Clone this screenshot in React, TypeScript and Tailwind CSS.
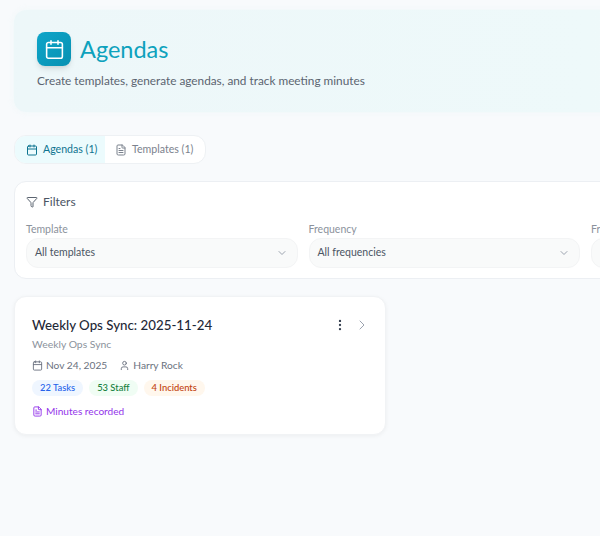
import React from "react";
import { Calendar, ChevronDown, ChevronRight, EllipsisVertical, FileText, Funnel, User } from "lucide-react";

const selects = [
  { label: "Template", value: "All templates" },
  { label: "Frequency", value: "All frequencies" },
  { label: "From", value: "" },
];

export default function App() {
  return (
    <div className="h-[536px] w-[600px] overflow-hidden bg-[#f8fafc] font-['Lato','Noto_Sans',sans-serif]">
      <div className="flex w-[1150px] flex-col pl-3.5 pt-2.5">
        <div className="h-[102px] rounded-xl bg-gradient-to-r from-[#edf7f9] via-[#eef9fa] to-[#f5fbfc] pl-[23px] pt-[22px] shadow-[0_0_6px_rgba(237,247,249,0.8)]">
          <div className="flex items-center gap-[9px]">
            <div className="flex size-[34px] items-center justify-center rounded-lg bg-gradient-to-br from-[#0ea5c9] to-[#0891b2] shadow-md">
              <Calendar className="size-[21px] text-white" strokeWidth={1.8} />
            </div>
            <h1 className="text-[23.5px] leading-[34px] font-normal text-[#0ea2bd]">Agendas</h1>
          </div>
          <p className="mt-[5px] text-[11.8px] leading-5 text-[#5b6470]">
            Create templates, generate agendas, and track meeting minutes
          </p>
        </div>

        <div className="mt-[23px] flex h-[29px] w-[192px] items-center overflow-hidden rounded-xl border border-[#eef1f4] bg-white">
          <div className="flex h-full w-[90px] items-center gap-[5px] bg-[#ecfbfd] pl-[11px] text-[10.6px] text-[#0e7490]">
            <Calendar className="size-3" />
            <span>Agendas (1)</span>
          </div>
          <div className="flex h-full items-center gap-[5px] pl-[10px] text-[10.6px] text-[#7b828d]">
            <FileText className="size-3" />
            <span>Templates (1)</span>
          </div>
        </div>

        <div className="mt-[17px] h-[98px] rounded-xl border border-[#eceff3] bg-white pl-[11px] pt-[11px]">
          <div className="flex items-center gap-[5px] text-xs leading-[18px] text-[#4b5563]">
            <Funnel className="size-3 text-[#5b6470]" />
            <span>Filters</span>
          </div>
          <div className="mt-[11px] grid grid-cols-[271.5px_271.5px_271.5px] gap-x-[11px]">
            {selects.map((s) => (
              <div key={s.label}>
                <div className="text-[10.5px] leading-[14px] text-[#8b929c]">{s.label}</div>
                <div className="mt-[2px] flex h-[30px] items-center justify-between rounded-xl border border-[#f3f4f5] bg-[#f9fafa] pl-2 pr-[9px] text-[10.5px] text-[#4b5563]">
                  <span>{s.value}</span>
                  <ChevronDown className="size-3 text-[#9ca3af]" />
                </div>
              </div>
            ))}
          </div>
        </div>

        <div className="mt-[17px] h-[139px] w-[372px] rounded-xl border border-[#f1f3f5] bg-white pl-[17px] pr-[15px] pt-[18px] shadow-[0_1px_4px_rgba(0,0,0,0.05)]">
          <div className="flex items-center justify-between">
            <h2 className="text-[13.3px] leading-5 font-medium text-[#1f2937]">Weekly Ops Sync: 2025-11-24</h2>
            <div className="flex items-center gap-[7px]">
              <EllipsisVertical className="size-3.5 text-[#374151]" />
              <ChevronRight className="size-4 text-[#9ca3af]" strokeWidth={1.5} />
            </div>
          </div>
          <p className="mt-[2px] text-[10.4px] leading-[14px] text-[#8b929c]">Weekly Ops Sync</p>
          <div className="mt-[7px] flex items-center gap-3 text-[10.2px] leading-[14px] text-[#6b7280]">
            <span className="flex items-center gap-[3px]">
              <Calendar className="size-[11px]" />
              Nov 24, 2025
            </span>
            <span className="flex items-center gap-[3px]">
              <User className="size-[11px]" />
              Harry Rock
            </span>
          </div>
          <div className="mt-[8px] flex items-center gap-[6px] text-[9.4px] leading-4 font-medium">
            <span className="rounded-full bg-[#eff6ff] px-2 text-[#2563eb]">22 Tasks</span>
            <span className="rounded-full bg-[#f0fdf4] px-2 text-[#15803d]">53 Staff</span>
            <span className="rounded-full bg-[#fff7ed] px-2 text-[#c2410c]">4 Incidents</span>
          </div>
          <div className="mt-[7px] flex items-center gap-[3px] text-[10.1px] leading-4 text-[#9333ea]">
            <FileText className="size-[11px]" />
            Minutes recorded
          </div>
        </div>
      </div>
    </div>
  );
}
